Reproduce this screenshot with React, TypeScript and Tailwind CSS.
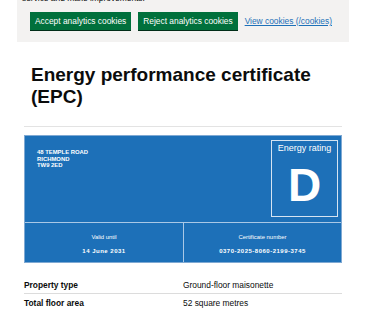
export default function App() {
  const font = { fontFamily: '"Liberation Sans", Arial, sans-serif' };
  return (
    <div className="min-h-[311px] bg-white text-[#0b0c0c]" style={font}>
      {/* cookie banner, scrolled so only its lower part shows */}
      <div className="mx-[17px] bg-[#f3f2f1] pb-[12px]">
        <p className="-mt-[7px] ml-[5px] text-[8.4px] leading-[10px]">service and make improvements.</p>
        <div className="mt-[9px] flex items-center gap-[7px] pl-[13px]">
          <button className="bg-[#00703c] px-[5px] py-[4px] text-[8.4px] leading-[10px] text-white shadow-[0_1px_0_#002d18]">
            Accept analytics cookies
          </button>
          <button className="bg-[#00703c] px-[5px] py-[4px] text-[8.4px] leading-[10px] text-white shadow-[0_1px_0_#002d18]">
            Reject analytics cookies
          </button>
          <a href="#" className="text-[8.4px] leading-[10px] text-[#1d70b8] underline">
            View cookies (/cookies)
          </a>
        </div>
      </div>

      <div className="px-[24px]">
        <h1 className="mt-[22px] pl-[7px] text-[19px] font-bold leading-[22px]">
          Energy performance certificate (EPC)
        </h1>
        <hr className="mt-[18px] border-0 border-t border-[#e3e3e3]" />

        <div className="mt-[8px] border border-[#7fa9d3] bg-[#1d70b8] text-white">
          <div className="flex h-[86px] items-start justify-between">
            <p className="pl-[12px] pt-[13px] text-[5.9px] font-bold uppercase leading-[6.7px]">
              48 Temple Road
              <br />
              Richmond
              <br />
              TW9 2ED
            </p>
            <div className="mr-[3px] mt-[4px] flex h-[77px] w-[67px] flex-col items-center border border-[#d5e4f2]">
              <span className="pt-[2px] text-[9px] leading-[10px]">Energy rating</span>
              <span className="mt-[9px] text-[46px] font-bold leading-none">D</span>
            </div>
          </div>
          <div className="grid h-[40px] grid-cols-2 border-t border-[#a9c8e6]">
            <div className="flex flex-col items-center pt-[10px]">
              <span className="text-[5.9px] leading-[8px]">Valid until</span>
              <span className="mt-[6px] text-[6px] font-bold leading-[8px] tracking-[0.5px]">14 June 2031</span>
            </div>
            <div className="flex flex-col items-center border-l border-[#a9c8e6] pt-[10px]">
              <span className="text-[5.9px] leading-[8px]">Certificate number</span>
              <span className="mt-[6px] text-[6px] font-bold leading-[8px] tracking-[0.5px]">
                0370-2025-8060-2199-3745
              </span>
            </div>
          </div>
        </div>

        <dl className="mt-[13px] text-[8.4px] leading-[10px]">
          <div className="grid grid-cols-2 border-b border-[#dcdcdc] pb-[3px] pt-[4px]">
            <dt className="font-bold">Property type</dt>
            <dd>Ground-floor maisonette</dd>
          </div>
          <div className="grid grid-cols-2 border-b border-[#dcdcdc] pb-[3px] pt-[4px]">
            <dt className="font-bold">Total floor area</dt>
            <dd>52 square metres</dd>
          </div>
        </dl>
      </div>
    </div>
  );
}
